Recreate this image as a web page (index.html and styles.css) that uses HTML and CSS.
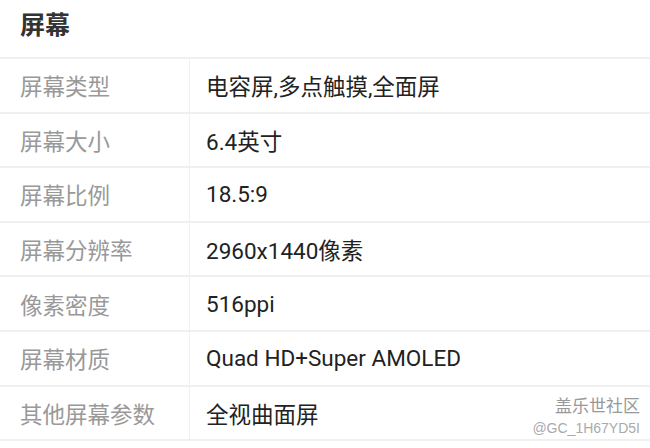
FILE: index.html
```html
<!DOCTYPE html>
<html lang="zh-CN">
<head>
  <meta charset="UTF-8">
  <meta name="viewport" content="width=device-width, initial-scale=1.0">
  <title>屏幕参数</title>
  <link rel="stylesheet" href="styles.css">
</head>
<body>
  <div class="spec-section">
    <h2>屏幕</h2>
    <table class="spec-table">
      <tr><td class="label">屏幕类型</td><td class="value">电容屏,多点触摸,全面屏</td></tr>
      <tr><td class="label">屏幕大小</td><td class="value">6.4英寸</td></tr>
      <tr><td class="label">屏幕比例</td><td class="value">18.5:9</td></tr>
      <tr><td class="label">屏幕分辨率</td><td class="value">2960x1440像素</td></tr>
      <tr><td class="label">像素密度</td><td class="value">516ppi</td></tr>
      <tr><td class="label">屏幕材质</td><td class="value">Quad HD+Super AMOLED</td></tr>
      <tr><td class="label">其他屏幕参数</td><td class="value">全视曲面屏</td></tr>
    </table>
    <div class="watermark">
      <div class="wm-name">盖乐世社区</div>
      <div class="wm-id">@GC_1H67YD5I</div>
    </div>
  </div>
</body>
</html>
```
FILE: styles.css
```css
body {
  margin: 0;
  background-color: #fff;
  font-family: Roboto, "Noto Sans CJK SC", sans-serif;
}

.spec-section {
  position: relative;
  width: 650px;
}

h2 {
  margin: 0;
  height: 57px;
  line-height: 52px;
  padding-left: 20px;
  font-size: 25px;
  font-weight: bold;
  color: #333;
}

.spec-table {
  width: 100%;
  border-collapse: collapse;
  border-top: 2px solid #f0f0f0;
}

.spec-table td {
  height: 52.6px;
  padding: 0;
  border-bottom: 2px solid #f0f0f0;
  font-size: 22.5px;
  vertical-align: middle;
}

.spec-table .label {
  width: 169px;
  padding-left: 20px;
  border-right: 1px solid #f0f0f0;
  color: #999;
}

.spec-table .value {
  padding-left: 16px;
  color: #222;
}

.watermark {
  position: absolute;
  right: 10px;
  bottom: 3px;
  text-align: right;
  color: #999;
}

.wm-name {
  font-size: 17px;
  line-height: 23px;
}

.wm-id {
  font-size: 14px;
  line-height: 20px;
  font-family: "Liberation Sans", sans-serif;
  color: #aaa;
}
```
